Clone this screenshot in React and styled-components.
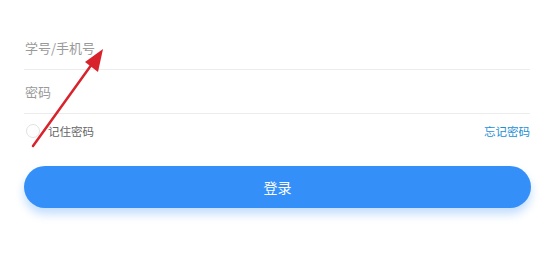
import React from 'react'
import styled, { createGlobalStyle } from 'styled-components'

const GlobalStyle = createGlobalStyle`
  html, body {
    margin: 0;
    padding: 0;
    background: #fff;
  }
  body {
    font-family: "Noto Sans CJK SC", "Noto Sans", sans-serif;
  }
`

const Page = styled.div`
  position: relative;
  width: 557px;
  height: 266px;
  background: #fff;
  padding: 26px 27px 0 24px;
  box-sizing: border-box;
`

const Form = styled.form`
  display: flex;
  flex-direction: column;
`

const Field = styled.div`
  height: 43px;
  display: flex;
  align-items: center;
  border-bottom: 1px solid #ececec;
  padding-left: 1px;
`

const Input = styled.input`
  flex: 1;
  border: none;
  outline: none;
  padding: 0;
  font-family: inherit;
  font-size: 13px;
  color: #333;
  background: transparent;
  &::placeholder {
    color: #9a9a9a;
  }
`

const OptionsRow = styled.div`
  height: 34px;
  display: flex;
  align-items: center;
  justify-content: space-between;
`

const Remember = styled.label`
  display: flex;
  align-items: center;
  gap: 8px;
  font-size: 11.5px;
  color: #666;
`

const Radio = styled.span`
  width: 14px;
  height: 14px;
  border-radius: 50%;
  border: 1px solid #e2e2e2;
  box-sizing: border-box;
  margin-left: 2px;
`

const Forgot = styled.a`
  font-size: 11.5px;
  color: #1c8fd6;
  text-decoration: none;
`

const Submit = styled.button`
  margin-top: 18px;
  height: 42px;
  width: 507px;
  border: none;
  border-radius: 21px;
  background: #3490f8;
  color: #fff;
  font-family: inherit;
  font-size: 14px;
  box-shadow: 0 6px 10px rgba(52, 144, 248, 0.3);
`

const Arrow = styled.svg`
  position: absolute;
  left: 0;
  top: 0;
  pointer-events: none;
`

export default function App() {
  return (
    <>
      <GlobalStyle />
      <Page>
        <Form onSubmit={e => e.preventDefault()}>
          <Field>
            <Input placeholder="学号/手机号" />
          </Field>
          <Field>
            <Input type="password" placeholder="密码" />
          </Field>
          <OptionsRow>
            <Remember>
              <Radio />
              记住密码
            </Remember>
            <Forgot href="#">忘记密码</Forgot>
          </OptionsRow>
          <Submit type="submit">登录</Submit>
        </Form>
        <Arrow width="557" height="266" viewBox="0 0 557 266">
          <line x1="33" y1="146" x2="92" y2="64" stroke="#d9232c" strokeWidth="2.5" strokeLinecap="round" />
          <polygon points="103,49 98,72 85,62" fill="#d9232c" />
        </Arrow>
      </Page>
    </>
  )
}
